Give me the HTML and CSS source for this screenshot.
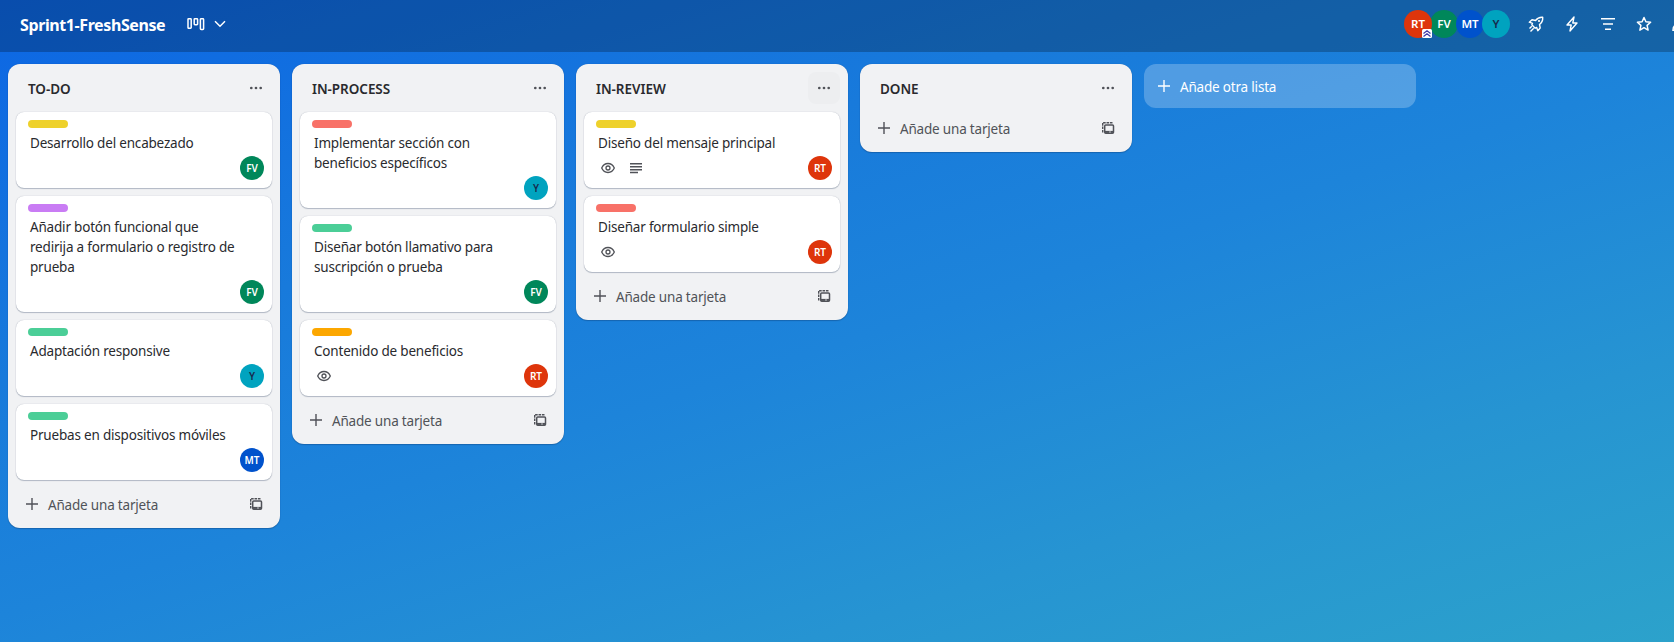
FILE: index.html
```
<!DOCTYPE html>
<html lang="es">
<head>
<meta charset="utf-8">
<title>Sprint1-FreshSense</title>
<link rel="stylesheet" href="styles.css">
</head>
<body>
<svg class="sprite" aria-hidden="true">
  <symbol id="plus" viewBox="0 0 16 16"><path d="M8 2v12M2 8h12" stroke="currentColor" stroke-width="1.4" fill="none"/></symbol>
  <symbol id="dots" viewBox="0 0 16 16"><g fill="currentColor"><circle cx="3.3" cy="8" r="1.35"/><circle cx="8" cy="8" r="1.35"/><circle cx="12.7" cy="8" r="1.35"/></g></symbol>
  <symbol id="eye" viewBox="0 0 16 16"><g fill="none" stroke="currentColor" stroke-width="1.3"><path d="M1.7 8C3 5 5.300 3.500 8 3.500S13 5 14.300 8C13 11 10.700 12.500 8 12.500S3 11 1.700 8Z"/><circle cx="8" cy="8" r="2"/></g></symbol>
  <symbol id="desc" viewBox="0 0 16 16"><path d="M2 3.700h12M2 6.700h12M2 9.700h12M2 12.500h8" stroke="currentColor" stroke-width="1.500" fill="none"/></symbol>
  <symbol id="template" viewBox="0 0 16 16"><g fill="none" stroke="currentColor"><path d="M2.700 12.500V2.700H13" stroke-width="1.400" stroke-dasharray="2.600 .8"/><rect x="4.700" y="5" width="8.800" height="8.200" rx="1" stroke-width="1.500"/><path d="M5 11.900h8.500" stroke-width="2"/></g><path d="M9 12h2" stroke="#f1f2f4" stroke-width=".7"/></symbol>
</svg>

<header class="topbar">
  <h1 class="board-name">Sprint1-FreshSense</h1>
  <svg class="view-icon" viewBox="0 0 18 14"><g fill="none" stroke="currentColor" stroke-width="1.500"><rect x="1" y="1.700" width="3.200" height="9.600" rx=".7"/><rect x="7.200" y="1.700" width="3.400" height="6" rx=".7"/><rect x="13.400" y="1.700" width="3.200" height="10.800" rx=".7"/></g></svg>
  <svg class="chevron" viewBox="0 0 12 8"><path d="M1 1.300l5 5 5-5" fill="none" stroke="currentColor" stroke-width="1.500"/></svg>
  <div class="members">
    <span class="avatar red">RT<svg class="admin" viewBox="0 0 10 9"><rect width="10" height="9" rx="1.500" fill="#fff"/><path d="M1.500 4.500L5 1.700l3.500 2.800M1.500 7.500L5 4.700l3.500 2.800" fill="none" stroke="#4038a8" stroke-width="1.200"/></svg></span>
    <span class="avatar green">FV</span>
    <span class="avatar blue">MT</span>
    <span class="avatar teal">Y</span>
  </div>
  <nav class="tools">
    <svg viewBox="0 0 16 16"><g fill="none" stroke="currentColor" stroke-width="1.400" stroke-linejoin="round"><path d="M14.700 1.300c-3.500-.3-5.300.7-7.200 3.200L4 3.800 1.300 6.200 4.500 7.300l-.7 1.500 3.400 3.400 1.500-.7 1.100 3.200 2.400-2.700-.7-3.500c2.500-1.900 3.500-3.700 3.200-7.200Z"/><path d="M3.800 10.200l-2.300 2.300M5.700 12.200l-3.200 3.200"/></g><circle cx="11" cy="5" r="1.100" fill="currentColor"/></svg>
    <svg viewBox="0 0 16 16"><path d="M10 1L3 9h4.200L6 15l7-8H8.800Z" fill="none" stroke="currentColor" stroke-width="1.400" stroke-linejoin="round"/></svg>
    <svg viewBox="0 0 16 16"><path d="M1 2.700h14M3 8h10M5 13.300h6" fill="none" stroke="currentColor" stroke-width="1.500"/></svg>
    <svg viewBox="0 0 16 16"><path d="M8 1.500l1.900 4.300 4.700.5-3.500 3.100 1 4.700L8 11.700l-4.100 2.400 1-4.700L1.400 6.300l4.700-.5Z" fill="none" stroke="currentColor" stroke-width="1.500" stroke-linejoin="round"/></svg>
    <svg viewBox="0 0 16 16"><path d="M1 14.300h14c0-4-1.500-5.300-4-5.300H5c-2.500 0-4 1.300-4 5.300Z" fill="none" stroke="currentColor" stroke-width="1.500"/><circle cx="8" cy="4.500" r="3" fill="none" stroke="currentColor" stroke-width="1.500"/></svg>
  </nav>
</header>

<main class="board">
  <section class="list">
    <div class="list-head"><h2>TO-DO</h2><button class="menu"><svg><use href="#dots"/></svg></button></div>
    <article class="card"><i class="label yellow"></i><p>Desarrollo del encabezado</p><div class="meta"><span class="avatar green">FV</span></div></article>
    <article class="card"><i class="label purple"></i><p>Añadir botón funcional que redirija a formulario o registro de prueba</p><div class="meta"><span class="avatar green">FV</span></div></article>
    <article class="card"><i class="label mint"></i><p>Adaptación responsive</p><div class="meta"><span class="avatar teal">Y</span></div></article>
    <article class="card"><i class="label mint"></i><p>Pruebas en dispositivos móviles</p><div class="meta"><span class="avatar blue">MT</span></div></article>
    <div class="list-foot"><svg><use href="#plus"/></svg><span>Añade una tarjeta</span><svg class="tpl"><use href="#template"/></svg></div>
  </section>

  <section class="list">
    <div class="list-head"><h2>IN-PROCESS</h2><button class="menu"><svg><use href="#dots"/></svg></button></div>
    <article class="card"><i class="label coral"></i><p>Implementar sección con beneficios específicos</p><div class="meta"><span class="avatar teal">Y</span></div></article>
    <article class="card"><i class="label mint"></i><p>Diseñar botón llamativo para suscripción o prueba</p><div class="meta"><span class="avatar green">FV</span></div></article>
    <article class="card"><i class="label orange"></i><p>Contenido de beneficios</p><div class="meta"><svg><use href="#eye"/></svg><span class="avatar red">RT</span></div></article>
    <div class="list-foot"><svg><use href="#plus"/></svg><span>Añade una tarjeta</span><svg class="tpl"><use href="#template"/></svg></div>
  </section>

  <section class="list">
    <div class="list-head"><h2>IN-REVIEW</h2><button class="menu hover"><svg><use href="#dots"/></svg></button></div>
    <article class="card"><i class="label yellow"></i><p>Diseño del mensaje principal</p><div class="meta"><svg><use href="#eye"/></svg><svg><use href="#desc"/></svg><span class="avatar red">RT</span></div></article>
    <article class="card"><i class="label coral"></i><p>Diseñar formulario simple</p><div class="meta"><svg><use href="#eye"/></svg><span class="avatar red">RT</span></div></article>
    <div class="list-foot"><svg><use href="#plus"/></svg><span>Añade una tarjeta</span><svg class="tpl"><use href="#template"/></svg></div>
  </section>

  <section class="list">
    <div class="list-head"><h2>DONE</h2><button class="menu"><svg><use href="#dots"/></svg></button></div>
    <div class="list-foot"><svg><use href="#plus"/></svg><span>Añade una tarjeta</span><svg class="tpl"><use href="#template"/></svg></div>
  </section>

  <button class="add-list"><svg><use href="#plus"/></svg><span>Añade otra lista</span></button>
</main>
</body>
</html>
```
FILE: styles.css
```
* { box-sizing: border-box; }
body {
  margin: 0;
  height: 642px;
  overflow: hidden;
  font: 13.500px/20px "Noto Sans", "Open Sans", sans-serif;
  letter-spacing: -0.19px;
  color: #292a2e;
  background: linear-gradient(162deg, #0c66e4 0%, #187adb 32%, #1d84da 52%, #2694d2 76%, #2ca2cb 100%);
}
h1, h2, p { margin: 0; }
button { border: 0; padding: 0; font: inherit; letter-spacing: inherit; color: inherit; }
svg { width: 16px; height: 16px; flex: none; display: block; }
.sprite { position: absolute; width: 0; height: 0; }

.topbar {
  display: flex;
  align-items: center;
  height: 52px;
  padding: 0 0 4px 20px;
  background: rgba(0, 0, 0, .24);
  color: #fff;
  overflow: hidden;
}
.board-name { width: 144px; margin-top: 2px; white-space: nowrap; font-size: 16px; line-height: 24px; font-weight: 700; letter-spacing: -.4px; }
.view-icon { width: 18px; height: 14px; margin-left: 23px; }
.chevron { width: 12px; height: 8px; margin-left: 9px; }
.members { display: flex; margin-left: auto; }
.members .avatar { position: relative; width: 28px; height: 28px; font-size: 11.500px; margin-right: -2px; }
.members .avatar:first-child { z-index: 1; }
.admin { position: absolute; right: 0; bottom: 0; width: 10px; height: 9px; }
.tools { display: flex; gap: 20px; width: 146px; margin-left: 20px; }

.avatar {
  display: flex;
  align-items: center;
  justify-content: center;
  flex: none;
  width: 24px;
  height: 24px;
  border-radius: 50%;
  font-size: 10px;
  font-weight: 600;
  letter-spacing: 0;
  color: #fff;
}
.red { background: #de350b; }
.green { background: #00875a; }
.blue { background: #0052cc; }
.teal { background: #00a3bf; color: #172b4d; }

.board { display: flex; align-items: flex-start; gap: 12px; padding: 12px 8px; }
.list {
  display: flex;
  flex-direction: column;
  gap: 8px;
  flex: none;
  width: 272px;
  padding: 8px;
  border-radius: 12px;
  background: #f1f2f4;
  box-shadow: 0 1px 1px rgba(9, 30, 66, .25), 0 0 1px rgba(9, 30, 66, .31);
}
.list-head { display: flex; align-items: center; height: 32px; padding-left: 12px; }
.list-head h2 { flex: 1; padding-top: 1px; font-size: 13.500px; line-height: 20px; font-weight: 600; letter-spacing: -.05px; }
.menu { display: grid; place-items: center; width: 32px; height: 32px; border-radius: 8px; background: none; color: #505258; }
.menu.hover { background: #edeef0; }

.card {
  padding: 8px 8px 8px 12px;
  border-radius: 8px;
  background: #fff;
  box-shadow: 0 1px 1px rgba(9, 30, 66, .25), 0 0 1px rgba(9, 30, 66, .31);
}
.label { display: block; width: 40px; height: 8px; margin-bottom: 4px; border-radius: 4px; }
.yellow { background: #eed12b; }
.purple { background: #c97cf4; }
.mint { background: #4bce97; }
.coral { background: #f87168; }
.orange { background: #fca700; }
.card p { padding: 1px 24px 0 2px; margin-bottom: 3px; }
.meta { display: flex; align-items: center; gap: 12px; height: 24px; padding-left: 4px; color: #505258; }
.meta .avatar { margin-left: auto; }

.list-foot { display: flex; align-items: center; gap: 8px; height: 32px; padding: 0 8px; color: #505258; }
.list-foot span { flex: 1; padding-top: 2px; }

.add-list {
  display: flex;
  align-items: center;
  gap: 8px;
  flex: none;
  width: 272px;
  height: 44px;
  padding: 0 12px;
  border-radius: 12px;
  background: rgba(255, 255, 255, .24);
  color: #fff;
}
.add-list span { flex: 1; padding-top: 2px; text-align: left; }
```
